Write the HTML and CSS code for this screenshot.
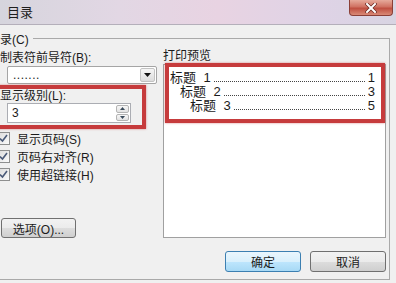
FILE: index.html
```html
<!DOCTYPE html>
<html lang="zh-CN">
  <head>
    <meta charset="UTF-8" />
    <meta name="viewport" content="width=device-width, initial-scale=1.0" />
    <title>目录</title>
    <link rel="stylesheet" href="styles.css">
  </head>
  <body>
    <div class="window">
      <!-- Title bar -->
      <div class="titlebar">
        <span class="title">目录</span>
        <span class="close">
          <svg width="12" height="10" viewBox="0 0 12 10">
            <path d="M2 1 L10 9 M10 1 L2 9" stroke="#6b2a22" stroke-width="3.4" stroke-linecap="square" />
            <path d="M2 1 L10 9 M10 1 L2 9" stroke="#ffffff" stroke-width="2" stroke-linecap="square" />
          </svg>
        </span>
      </div>

      <!-- Tab panel -->
      <div class="frame">
        <div class="frame-head">
          <span class="frame-label">目录(C)</span>
          <span class="frame-rule"></span>
        </div>

        <div class="columns">
          <div class="col-left">
            <div class="label label-first">制表符前导符(B):</div>
            <div class="select">
              <span class="select-text">.......</span>
              <span class="select-arrow">
                <svg width="7" height="4" viewBox="0 0 7 4"><path d="M0 0 H7 L3.5 4 Z" fill="#111" /></svg>
              </span>
            </div>

            <div class="mark mark-level">
              <div class="label label-tight">显示级别(L):</div>
              <div class="spin">
                <span class="spin-text">3</span>
                <span class="spin-btns">
                  <span class="spin-btn">
                    <svg width="5" height="3" viewBox="0 0 5 3"><path d="M0 3 H5 L2.5 0 Z" fill="#3a4a5a" /></svg>
                  </span>
                  <span class="spin-btn">
                    <svg width="5" height="3" viewBox="0 0 5 3"><path d="M0 0 H5 L2.5 3 Z" fill="#3a4a5a" /></svg>
                  </span>
                </span>
              </div>
            </div>

            <div class="checks">
              <div class="check">
                <span class="box"><svg width="9" height="9" viewBox="0 0 9 9"><path d="M1 4.5 L3.5 7 L8 1" stroke="#4a5a78" stroke-width="1.6" fill="none" /></svg></span>
                显示页码(S)
              </div>
              <div class="check">
                <span class="box"><svg width="9" height="9" viewBox="0 0 9 9"><path d="M1 4.5 L3.5 7 L8 1" stroke="#4a5a78" stroke-width="1.6" fill="none" /></svg></span>
                页码右对齐(R)
              </div>
              <div class="check">
                <span class="box"><svg width="9" height="9" viewBox="0 0 9 9"><path d="M1 4.5 L3.5 7 L8 1" stroke="#4a5a78" stroke-width="1.6" fill="none" /></svg></span>
                使用超链接(H)
              </div>
            </div>

            <button class="btn btn-options">选项(O)...</button>
          </div>

          <div class="col-right">
            <div class="label label-preview">打印预览</div>
            <div class="preview">
              <div class="mark mark-preview">
                <div class="toc-row lvl1"><span>标题 1</span><span class="leader"></span><span>1</span></div>
                <div class="toc-row lvl2"><span>标题 2</span><span class="leader"></span><span>3</span></div>
                <div class="toc-row lvl3"><span>标题 3</span><span class="leader"></span><span>5</span></div>
              </div>
            </div>
          </div>
        </div>

        <div class="footer">
          <button class="btn btn-ok">确定</button>
          <button class="btn">取消</button>
        </div>
      </div>
    </div>
  </body>
</html>
```

FILE: styles.css
```css
body {
  margin: 0;
  font-family: "Liberation Sans", "Noto Sans CJK SC", sans-serif;
  font-size: 12px;
  color: #1b1b1b;
}

.window {
  width: 396px;
  height: 283px;
  background-color: #f0f0f0;
  display: flex;
  flex-direction: column;
  overflow: hidden;
}

/* Title bar */
.titlebar {
  flex: none;
  height: 25px;
  box-sizing: border-box;
  display: flex;
  justify-content: space-between;
  align-items: flex-start;
  background: linear-gradient(90deg, #d6d5dd 0%, #e2d7e4 30%, #e8d3e2 55%, #dfd3e6 80%, #d8d4e2 100%);
  border-bottom: 1px solid #b4afba;
}

.title {
  padding-left: 7px;
  line-height: 25px;
  font-size: 13px;
  color: #1e1e1e;
}

.close {
  width: 44px;
  height: 16px;
  margin-right: 3px;
  box-sizing: border-box;
  border: 1px solid #8b3f37;
  border-top: none;
  border-radius: 0 0 4px 4px;
  background: linear-gradient(#e6aa9b, #d07262 45%, #bf4f40 55%, #d98a77);
  display: flex;
  align-items: center;
  justify-content: center;
}

/* Tab panel frame */
.frame {
  flex: 1;
  display: flex;
  flex-direction: column;
  margin: 13px 6px 3px -12px;
  border-right: 1px solid #a9a9a9;
  border-bottom: 1px solid #a9a9a9;
}

.frame-head {
  display: flex;
  align-items: center;
  height: 16px;
  margin-top: -8px;
}

.frame-label {
  margin-right: 4px;
  white-space: nowrap;
}

.frame-rule {
  flex: 1;
  height: 0;
  border-top: 1px solid #a9a9a9;
}

.columns {
  display: grid;
  grid-template-columns: 157px 223px;
  column-gap: 6px;
  padding-left: 12px;
}

.label {
  height: 16px;
  line-height: 16px;
  white-space: nowrap;
}

.label-first {
  margin-top: 4px;
}

.label-tight {
  height: 14px;
  line-height: 14px;
}

.label-preview {
  margin-top: 2px;
}

/* Leader dropdown */
.select {
  margin-left: 7px;
  width: 150px;
  height: 18px;
  box-sizing: border-box;
  border: 1px solid #a5a5a5;
  border-radius: 2px;
  background-color: #fff;
  display: flex;
  justify-content: space-between;
  align-items: center;
}

.select-text {
  padding-left: 5px;
  letter-spacing: 0.5px;
  line-height: 16px;
}

.select-arrow {
  width: 15px;
  height: 14px;
  margin-right: 1px;
  box-sizing: border-box;
  border: 1px solid #c3c3c3;
  border-radius: 2px;
  background: linear-gradient(#f6f6f6, #dcdcdc);
  display: flex;
  align-items: center;
  justify-content: center;
}

/* Red highlight boxes */
.mark {
  border: 4px solid #c63b3c;
  box-shadow: 0 0 2px rgba(200, 60, 60, 0.6);
}

.mark-level {
  margin: 1px 0 0 -4px;
  width: 150px;
  box-sizing: border-box;
  padding-bottom: 2px;
}

.spin {
  margin-left: 7px;
  width: 124px;
  height: 20px;
  box-sizing: border-box;
  border: 1px solid #abadb3;
  background-color: #fff;
  display: flex;
  justify-content: space-between;
}

.spin-text {
  padding-left: 4px;
  line-height: 18px;
}

.spin-btns {
  width: 13px;
  margin: 1px;
  display: flex;
  flex-direction: column;
  gap: 1px;
}

.spin-btn {
  flex: 1;
  box-sizing: border-box;
  border: 1px solid #b4b4b4;
  border-radius: 2px;
  background: linear-gradient(#f7f7f7, #e2e2e2);
  display: flex;
  align-items: center;
  justify-content: center;
}

/* Checkboxes */
.check {
  height: 18px;
  display: flex;
  align-items: center;
  margin-left: -3px;
  white-space: nowrap;
}

.box {
  width: 13px;
  height: 13px;
  margin-right: 7px;
  box-sizing: border-box;
  border: 1px solid #8e8f8f;
  background: linear-gradient(135deg, #dcdcdc, #fbfbfb);
  display: flex;
  align-items: center;
  justify-content: center;
}

/* Buttons */
.btn {
  height: 21px;
  width: 76px;
  padding: 0;
  font: inherit;
  color: #1b1b1b;
  border: 1px solid #707070;
  border-radius: 3px;
  background: linear-gradient(#f2f2f2 0%, #ebebeb 50%, #dddddd 51%, #cfcfcf 100%);
}

.btn-options {
  margin: 35px 0 0 1px;
  width: 75px;
  height: 20px;
}

.btn-ok {
  border-color: #3c7fb1;
  background: linear-gradient(#eaf6fd 0%, #d9f0fc 50%, #bee6fd 51%, #a7d9f5 100%);
}

.footer {
  display: flex;
  justify-content: flex-end;
  gap: 9px;
  margin-top: 13px;
  padding-right: 3px;
}

/* Print preview */
.preview {
  height: 174px;
  box-sizing: border-box;
  border: 1px solid #a0a0a0;
  background-color: #fff;
}

.mark-preview {
  margin: -2px 0 0 1px;
  padding: 4px 6px 6px 1px;
}

.toc-row {
  display: flex;
  align-items: flex-end;
  height: 14px;
  line-height: 14px;
  font-size: 13px;
  word-spacing: 4px;
  white-space: nowrap;
}

.lvl2 {
  padding-left: 10px;
}

.lvl3 {
  padding-left: 20px;
}

.leader {
  flex: 1;
  height: 0;
  margin: 0 3px 3px 3px;
  border-bottom: 1px dotted #444;
}
```
